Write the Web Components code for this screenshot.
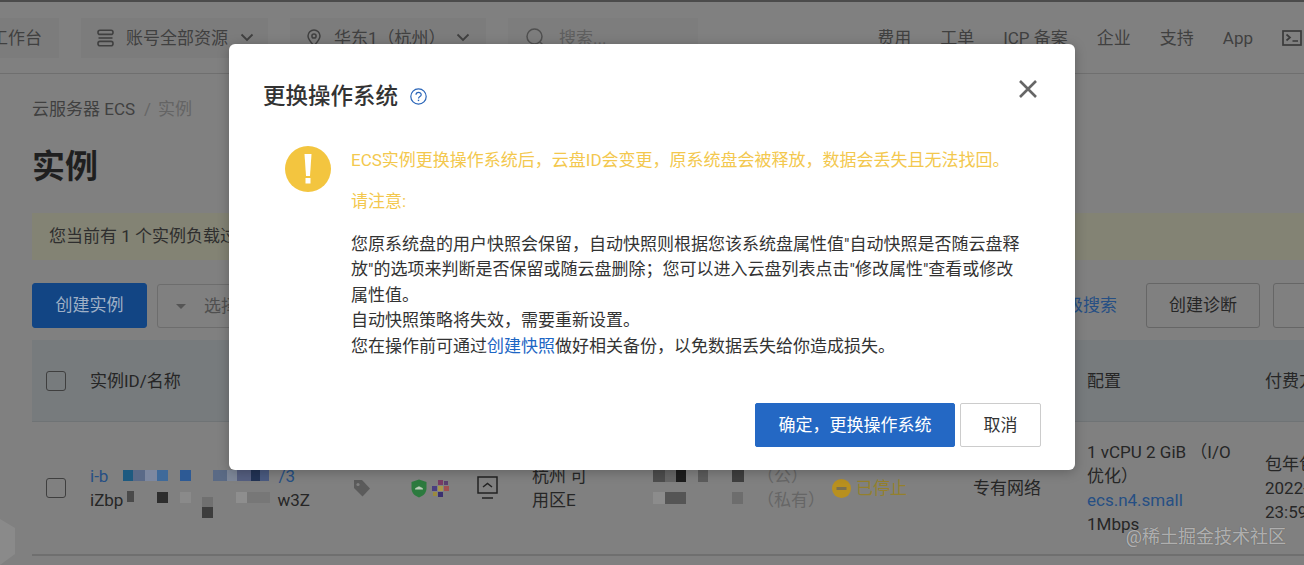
<!DOCTYPE html>
<html lang="zh-CN">
<head>
<meta charset="utf-8">
<title>更换操作系统</title>
<style>
  html, body { margin: 0; height: 100%; }
  body {
    width: 1304px; height: 565px; overflow: hidden; position: relative;
    background: #808080; color: #1f1f1f;
    font: 17px/24px Roboto, "Noto Sans CJK SC", sans-serif;
  }
</style>
</head>
<body>
<ecs-topbar></ecs-topbar>
<ecs-page>
  <ecs-alert>您当前有 1 个实例负载过高，请及时处理。</ecs-alert>
  <ecs-toolbar></ecs-toolbar>
  <ecs-table></ecs-table>
</ecs-page>
<ecs-modal heading="更换操作系统">
  <span slot="warning">ECS实例更换操作系统后，云盘ID会变更，原系统盘会被释放，数据会丢失且无法找回。</span>
  <span slot="note">请注意:</span>
  您原系统盘的用户快照会保留，自动快照则根据您该系统盘属性值"自动快照是否随云盘释<br>放"的选项来判断是否保留或随云盘删除；您可以进入云盘列表点击"修改属性"查看或修改<br>属性值。<br>
  自动快照策略将失效，需要重新设置。<br>
  您在操作前可通过<a href="#">创建快照</a>做好相关备份，以免数据丢失给你造成损失。
</ecs-modal>
<ecs-corner></ecs-corner>

<script>
class EcsTopbar extends HTMLElement {
  constructor() {
    super();
    this.attachShadow({ mode: "open" });
    this.shadowRoot.innerHTML = `
      <style>
        :host { display: flex; align-items: center; height: 71px; border-top: 2px solid #4b4b4b; border-bottom: 1px solid #6f6f6f; color: #404040; white-space: nowrap; box-sizing: content-box; }
        .chip { display: flex; align-items: center; height: 40px; padding: 0 17px; background: #7c7c7c; flex: none; margin-right: 22px; }
        .chip svg { flex: none; }
        .first { margin-left: -26px; }
        .res { width: 187px; box-sizing: border-box; padding-left: 16px; gap: 12px; }
        .region { width: 196px; box-sizing: border-box; gap: 13px; }
        .region .down { margin-left: -3px; }
        .search { width: 190px; box-sizing: border-box; padding-left: 18px; gap: 14px; color: #5f5f5f; background: #7d7d7d; margin-right: 0; }
        nav { display: flex; align-items: center; gap: 29px; margin-left: auto; padding-right: 2px; }
      </style>
      <div class="chip first">工作台</div>
      <div class="chip res">
        <svg width="17" height="18" viewBox="0 0 17 18" fill="none" stroke="#404040" stroke-width="1.6"><rect x="1" y="1.2" width="15" height="4.2" rx="2"/><path d="M1.5 9h14"/><rect x="1" y="12.4" width="15" height="4.4" rx="2"/></svg>
        <span>账号全部资源</span>
        <svg width="14" height="9" viewBox="0 0 14 9" fill="none" stroke="#404040" stroke-width="1.8"><path d="M1.5 1.5 7 7l5.5-5.5"/></svg>
      </div>
      <div class="chip region">
        <svg width="14" height="18" viewBox="0 0 14 18" fill="none" stroke="#404040" stroke-width="1.5"><path d="M7 16.8C3.5 13 1 10 1 7a6 6 0 0 1 12 0c0 3-2.500 6-6 9.800Z"/><circle cx="7" cy="7" r="2.100"/></svg>
        <span>华东1（杭州）</span>
        <svg class="down" width="14" height="9" viewBox="0 0 14 9" fill="none" stroke="#404040" stroke-width="1.8"><path d="M1.500 1.500 7 7l5.500-5.500"/></svg>
      </div>
      <div class="chip search">
        <svg width="19" height="19" viewBox="0 0 19 19" fill="none" stroke="#505050" stroke-width="1.5"><circle cx="8.500" cy="8.500" r="7.500"/><path d="m14 14 4 4"/></svg>
        <span>搜索...</span>
      </div>
      <nav>
        <span>费用</span><span>工单</span><span>ICP 备案</span><span>企业</span><span>支持</span><span>App</span>
        <svg width="20" height="16" viewBox="0 0 20 16" fill="none" stroke="#3a3a3a" stroke-width="1.700"><rect x="1" y="1" width="18" height="14"/><path d="m4.500 4.500 3.500 3-3.500 3M10.500 11H16"/></svg>
      </nav>
    `;
  }
}

class EcsPage extends HTMLElement {
  constructor() {
    super();
    this.attachShadow({ mode: "open" });
    this.shadowRoot.innerHTML = `
      <style>
        :host { display: block; padding-left: 32px; }
        .crumb { padding-top: 23px; line-height: 24px; color: #404040; white-space: nowrap; }
        .crumb i { font-style: normal; color: #666; margin: 0 7px 0 9px; }
        .crumb b { font-weight: 400; color: #646464; }
        h1 { margin: 22px 0 0; font-size: 33px; line-height: 48px; font-weight: 700; color: #1f1f1f; }
      </style>
      <div class="crumb">云服务器 ECS<i>/</i><b>实例</b></div>
      <h1>实例</h1>
      <slot></slot>
    `;
  }
}

class EcsAlert extends HTMLElement {
  constructor() {
    super();
    this.attachShadow({ mode: "open" });
    this.shadowRoot.innerHTML = `
      <style>
        :host { display: block; margin-top: 22px; height: 47px; line-height: 47px; padding-left: 17px; background: #838374; color: #2e2e2e; white-space: nowrap; }
      </style>
      <slot></slot>
    `;
  }
}

class EcsToolbar extends HTMLElement {
  constructor() {
    super();
    this.attachShadow({ mode: "open" });
    this.shadowRoot.innerHTML = `
      <style>
        :host { display: flex; align-items: center; margin-top: 22px; height: 46px; white-space: nowrap; }
        .btn { flex: none; box-sizing: border-box; height: 45px; line-height: 43px; border: 1px solid #666; border-radius: 3px; text-align: center; color: #262626; }
        .create { width: 115px; background: #124584; border-color: #124584; color: #9fb0c6; }
        .select { flex: none; box-sizing: border-box; width: 890px; height: 44px; margin: 2px 0 0 10px; padding-left: 18px; display: flex; align-items: center; gap: 18px; border: 1px solid #6d6d6d; border-radius: 3px; color: #4f4f4f; }
        .caret { width: 0; height: 0; border: 5px solid transparent; border-top: 5px solid #555; border-bottom: 0; }
        .adv { flex: none; width: 68px; margin-left: 2px; color: #264f84; }
        .diag { width: 114px; margin-left: 29px; }
        .more { width: 100px; margin-left: 13px; }
      </style>
      <div class="btn create">创建实例</div>
      <div class="select"><span class="caret"></span><span>选择实例属性项搜索</span></div>
      <div class="adv">高级搜索</div>
      <div class="btn diag">创建诊断</div>
      <div class="btn more">报表</div>
    `;
  }
}

class EcsTable extends HTMLElement {
  constructor() {
    super();
    this.attachShadow({ mode: "open" });
    // masked ids in the row: x, y, w, h, colour, relative to the row
    const blocks = [
      [91,48,10,11,"#1d5a80"],[101,48,12,11,"#5a6a88"],[113,48,12,11,"#7d88a0"],[125,48,11,11,"#3f6a9a"],
      [148,48,11,11,"#2d5a95"],[181,48,14,11,"#5a6a85"],[195,48,10,11,"#7d8798"],[205,48,14,11,"#555f80"],
      [219,48,9,11,"#223355"],[228,48,9,11,"#4a5a80"],
      [95,69,7,11,"#4a4a4a"],[125,70,11,11,"#2d2d2d"],[148,70,11,11,"#8a8a8a"],
      [170,75,11,10,"#707070"],[170,85,11,11,"#3d3d3d"],[204,70,11,11,"#8e8e8e"],[215,70,23,11,"#777"],
      [621,48,12,12,"#4d4d4d"],[633,48,11,12,"#666"],[644,48,10,12,"#1d1d1d"],[666,48,10,12,"#5c5c5c"],[700,48,12,12,"#3f3f3f"],
      [621,70,12,12,"#8c8c8c"],[633,70,21,12,"#555"],[700,70,11,12,"#6d6d6d"]
    ].map(b => `<i style="left:${b[0]}px;top:${b[1]}px;width:${b[2]}px;height:${b[3]}px;background:${b[4]}"></i>`).join("");
    this.shadowRoot.innerHTML = `
      <style>
        :host { display: block; margin-top: 12px; white-space: nowrap; color: #262626; }
        .grid { display: grid; grid-template-columns: 58px 262px 59px 66px 55px 121px 104px 75px 141px 114px 178px 60px; align-items: center; }
        .head { height: 81px; background: #777b7d; border-bottom: 1px solid #6f7375; }
        .row { height: 132px; position: relative; border-bottom: 2px solid #6f6f6f; }
        .check { width: 18px; height: 18px; margin-left: 14px; border: 1px solid #3f3f3f; border-radius: 3px; }
        .link { color: #264f84; }
        .pair { display: flex; justify-content: space-between; }
        .muted { color: #666; }
        .stop { display: flex; align-items: center; gap: 5px; color: #94802c; }
        .mask { position: absolute; inset: 0; pointer-events: none; }
        .mask i { position: absolute; }
        .icons { display: flex; align-items: center; gap: 4px; }
        svg { display: block; }
      </style>
      <div class="grid head">
        <div class="check"></div><div>实例ID/名称</div>
        <div></div><div></div><div></div><div></div><div></div><div></div><div></div><div></div>
        <div>配置</div><div>付费方式</div>
      </div>
      <div class="grid row">
        <div class="check"></div>
        <div>
          <div class="pair link" style="width:205px"><span>i-b</span><span>/3</span></div>
          <div class="pair" style="width:220px"><span>iZbp</span><span>w3Z</span></div>
        </div>
        <div><svg width="19" height="19" viewBox="0 0 19 19"><path fill="#5b5b5b" d="M2 1h8l8 8.500-7.500 8L2 9Z"/><circle cx="6" cy="5.500" r="1.600" fill="#808080"/></svg></div>
        <div class="icons">
          <svg width="16" height="19" viewBox="0 0 16 19"><path fill="#2c7a3e" d="M8 .5 15.500 3v6.500c0 4.500-3.500 7.500-7.500 9-4-1.500-7.500-4.500-7.500-9V3Z"/><path fill="#b9cdb9" d="M4 10.500c0-1.500 1-2 2-2 .5-1.500 3.500-1.500 4 0 1 0 2 .5 2 2Z"/></svg>
          <svg width="19" height="19" viewBox="0 0 19 19"><rect x="7" y="1" width="5" height="5" fill="#7a3c64"/><rect x="1" y="7" width="5" height="5" fill="#4a3f80"/><rect x="13" y="7" width="5" height="5" fill="#a05050"/><rect x="7" y="13" width="5" height="5" fill="#3a3070"/><rect x="7" y="7" width="5" height="5" fill="#a9964a"/><rect x="13" y="2" width="4" height="4" fill="#5a3f70"/><rect x="2" y="13" width="4" height="4" fill="#9a8a40"/></svg>
        </div>
        <div><svg width="21" height="24" viewBox="0 0 21 24" fill="none" stroke="#222" stroke-width="1.500"><rect x="1" y="1" width="19" height="16"/><path d="m6 11 4.500-3.500L15 11M5 22h11" /></svg></div>
        <div>杭州 可<br>用区E</div>
        <div></div>
        <div class="muted">（公）<br>（私有）</div>
        <div class="stop">
          <svg width="19" height="19" viewBox="0 0 19 19"><circle cx="9.500" cy="9.500" r="9.500" fill="#b8901f"/><rect x="4.500" y="8" width="10" height="3" fill="#7a7050"/></svg>
          <span>已停止</span>
        </div>
        <div>专有网络</div>
        <div>1 vCPU 2 GiB （I/O<br>优化）<br><span class="link">ecs.n4.small</span><br>1Mbps</div>
        <div>包年包月<br>2022-12-31<br>23:59</div>
        <div class="mask">${blocks}</div>
      </div>
    `;
  }
}

class EcsModal extends HTMLElement {
  constructor() {
    super();
    this.attachShadow({ mode: "open" });
    this.shadowRoot.innerHTML = `
      <style>
        :host { position: absolute; left: 229px; top: 44px; width: 846px; height: 426px; box-sizing: border-box; background: #fff; border-radius: 6px; box-shadow: 0 2px 12px rgba(0,0,0,.25); padding: 34px 34px 23px; display: flex; flex-direction: column; color: #333; }
        header { display: flex; align-items: center; height: 36px; }
        h2 { margin: 0; font-size: 22.500px; line-height: 36px; font-weight: 500; color: #333; }
        .help { margin: 0 0 0 12px; }
        .close { margin-left: auto; margin-top: -14px; margin-right: 4px; }
        .main { display: flex; margin: 32px 0 0 22px; }
        .sign { flex: none; margin: 0 20px 0 0; }
        .warn { color: #f3c84e; line-height: 26px; padding-top: 1px; }
        .warn .note { display: block; margin-top: 15px; }
        .body { margin-top: 18px; line-height: 25.400px; white-space: nowrap; color: #333; }
        ::slotted(a) { color: #1d66c4; text-decoration: none; }
        footer { margin-top: auto; display: flex; justify-content: flex-end; gap: 5px; }
        button { font: inherit; height: 44px; border-radius: 2px; padding: 0; }
        .ok { width: 200px; background: #2468c4; border: 1px solid #2468c4; color: #fff; }
        .no { width: 81px; margin-right: 0; background: #fff; border: 1px solid #ccc; color: #333; }
      </style>
      <header>
        <h2>${this.getAttribute("heading")}</h2>
        <svg class="help" width="17" height="17" viewBox="0 0 17 17" fill="none" stroke="#2a65b8" stroke-width="1.200"><circle cx="8.500" cy="8.500" r="7.700"/><path d="M6 6.800c0-3.100 5.200-3.100 5.200-.1 0 1.900-2.700 1.800-2.700 3.900"/><path d="M8.500 11.700v1.400" stroke-width="1.400"/></svg>
        <svg class="close" width="18" height="18" viewBox="0 0 18 18" fill="none" stroke="#666" stroke-width="2.600"><path d="m1 1 16 16M17 1 1 17"/></svg>
      </header>
      <div class="main">
        <svg class="sign" width="46" height="46" viewBox="0 0 46 46"><circle cx="23" cy="23" r="23" fill="#f3c53f"/><path fill="#fff" d="M19.500 8h7l-1.500 22h-4Z"/><rect x="20.500" y="32" width="5" height="5.500" fill="#fff"/></svg>
        <div>
          <div class="warn"><slot name="warning"></slot><span class="note"><slot name="note"></slot></span></div>
          <div class="body"><slot></slot></div>
        </div>
      </div>
      <footer><button class="ok">确定，更换操作系统</button><button class="no">取消</button></footer>
    `;
  }
}

class EcsCorner extends HTMLElement {
  constructor() {
    super();
    this.attachShadow({ mode: "open" });
    this.shadowRoot.innerHTML = `
      <style>
        :host { position: absolute; inset: 0; pointer-events: none; overflow: hidden; }
        .mark { position: absolute; right: 18px; bottom: 16px; font-size: 18px; line-height: 24px; color: rgba(255,255,255,.55); text-shadow: 0 0 1px rgba(0,0,0,.4); white-space: nowrap; }
        svg { position: absolute; left: 0; bottom: 0; }
      </style>
      <svg width="16" height="46" viewBox="0 0 16 46"><path fill="#8a8a8a" d="M0 0 15 9v26L0 46Z"/></svg>
      <div class="mark">@稀土掘金技术社区</div>
    `;
  }
}

customElements.define("ecs-topbar", EcsTopbar);
customElements.define("ecs-page", EcsPage);
customElements.define("ecs-alert", EcsAlert);
customElements.define("ecs-toolbar", EcsToolbar);
customElements.define("ecs-table", EcsTable);
customElements.define("ecs-modal", EcsModal);
customElements.define("ecs-corner", EcsCorner);
</script>
</body>
</html>
